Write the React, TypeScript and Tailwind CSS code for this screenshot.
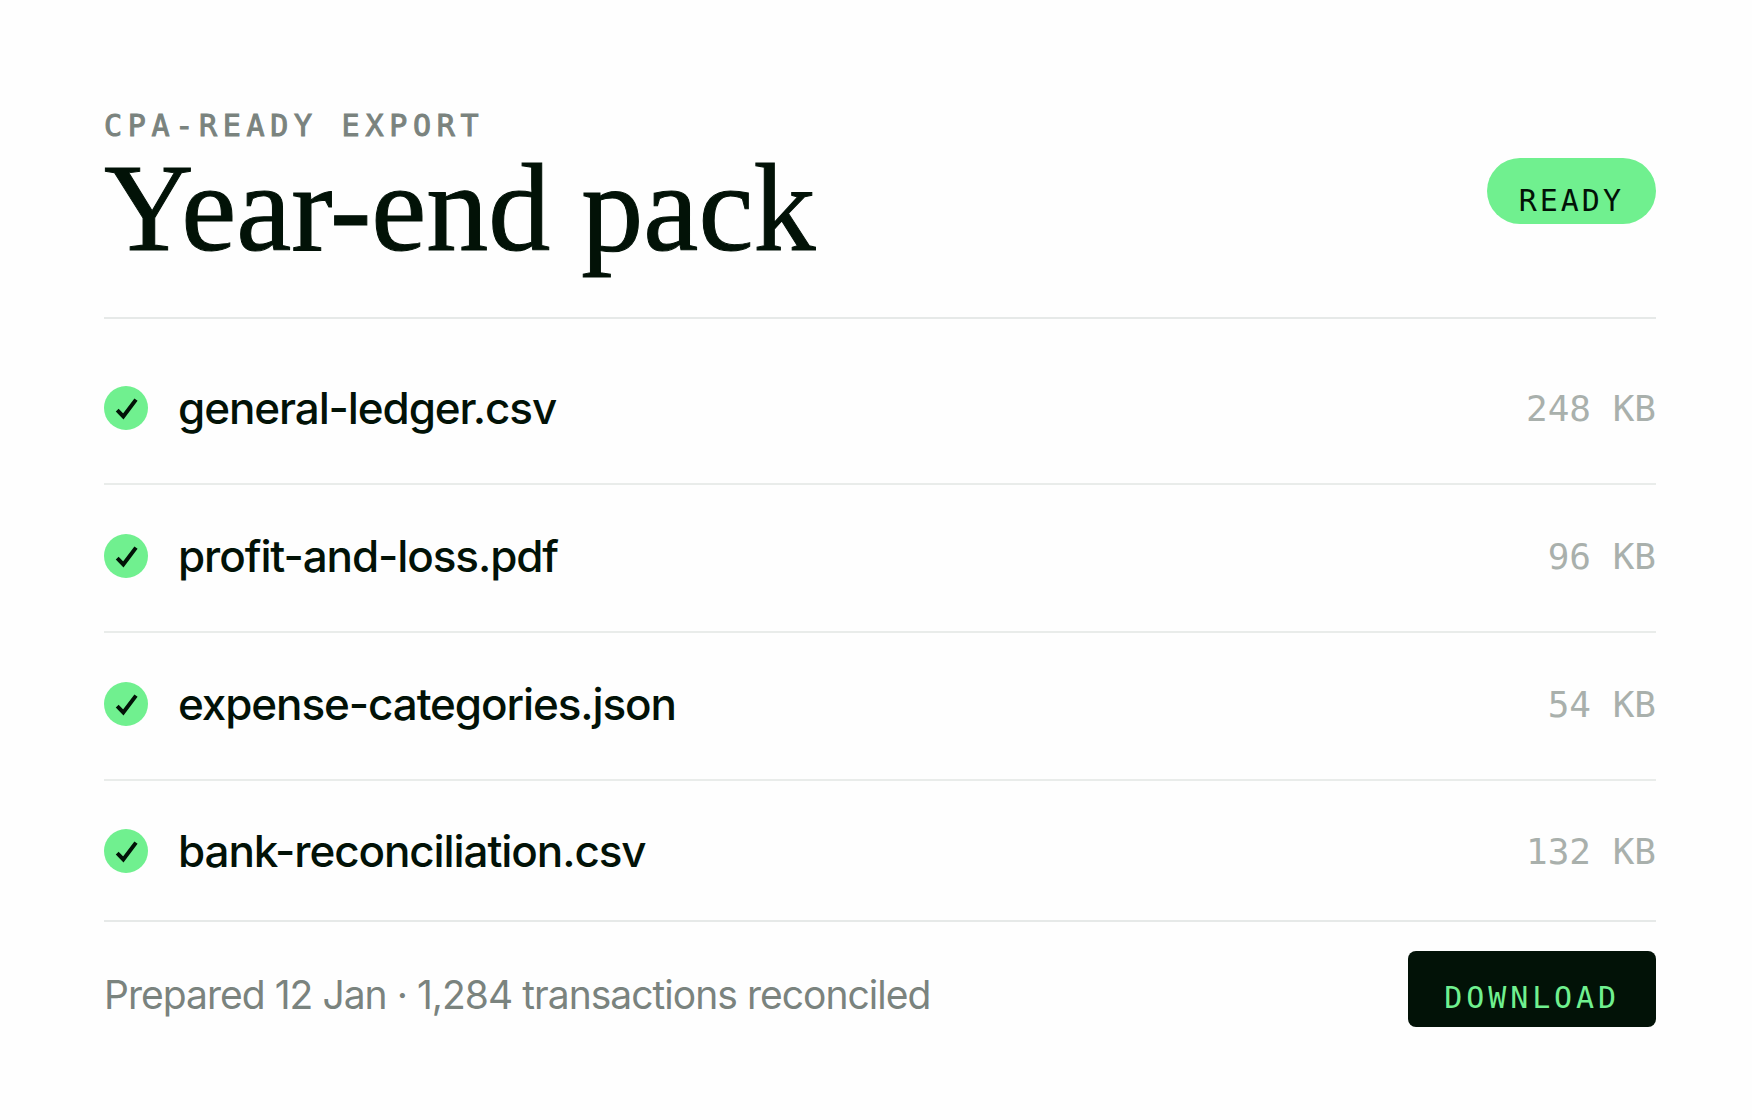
import React from "react";

interface ExportFile {
  name: string;
  size: string;
}

const files: ExportFile[] = [
  { name: "general-ledger.csv", size: "248 KB" },
  { name: "profit-and-loss.pdf", size: "96 KB" },
  { name: "expense-categories.json", size: "54 KB" },
  { name: "bank-reconciliation.csv", size: "132 KB" },
];

const CheckBadge: React.FC = () => (
  <span className="flex h-11 w-11 shrink-0 items-center justify-center rounded-full bg-[#70f08f]">
    <svg
      viewBox="0 0 44 44"
      className="h-11 w-11"
      fill="none"
      stroke="#021207"
      strokeWidth="4"
      aria-hidden="true"
    >
      <path d="M13.2 24.2L19.3 30.4L32 13.6" />
    </svg>
  </span>
);

const FileRow: React.FC<{ file: ExportFile }> = ({ file }) => (
  <li className="flex h-[148px] items-center gap-[30px] border-b-2 border-[#e9ecea] pb-1 last:h-[139px] last:border-b-0 last:pb-0">
    <CheckBadge />
    <span className="flex-1 text-[44px] font-medium tracking-tight">
      {file.name}
    </span>
    <span className="pt-[2px] font-['DejaVu_Sans_Mono',monospace] text-[36px] text-[#a9b0ac]">
      {file.size}
    </span>
  </li>
);

/**
 * Year-end export summary with its file list and download action
 */
const App: React.FC = () => {
  return (
    <main className="min-h-screen bg-[#fefefe] pt-[105px] pr-24 pb-[92px] pl-[104px] font-['Inter',sans-serif] text-[#021207]">
      <header className="flex items-start justify-between border-b-2 border-[#e6e9e8] pb-[46px]">
        <div>
          <p className="font-['DejaVu_Sans_Mono',monospace] text-[30px] leading-[42px] tracking-[0.19em] text-[#7a837e] [-webkit-text-stroke:1px]">
            CPA-READY EXPORT
          </p>
          <h1 className="font-['Liberation_Serif',serif] text-[124px] leading-[124px] font-medium [-webkit-text-stroke:1px]">
            Year-end pack
          </h1>
        </div>
        <span className="mt-[53px] flex h-[66px] items-end rounded-full bg-[#70f08f] px-8 pb-[2px] font-['DejaVu_Sans_Mono',monospace] text-[30px] leading-[42px] tracking-widest">
          READY
        </span>
      </header>

      <ul className="pt-[18px]">
        {files.map((file) => (
          <FileRow key={file.name} file={file} />
        ))}
      </ul>

      <footer className="flex items-center justify-between border-t-2 border-[#e6e9e8] pt-[29px]">
        <p className="pt-3 text-[39px] tracking-tight text-[#7a837e]">
          Prepared 12 Jan · 1,284 transactions reconciled
        </p>
        <button
          type="button"
          className="flex h-[76px] items-end rounded-lg bg-[#021207] px-9 pb-2 font-['DejaVu_Sans_Mono',monospace] text-[30px] leading-[42px] tracking-[0.13em] text-[#70f08f]"
        >
          DOWNLOAD
        </button>
      </footer>
    </main>
  );
};

export default App;
